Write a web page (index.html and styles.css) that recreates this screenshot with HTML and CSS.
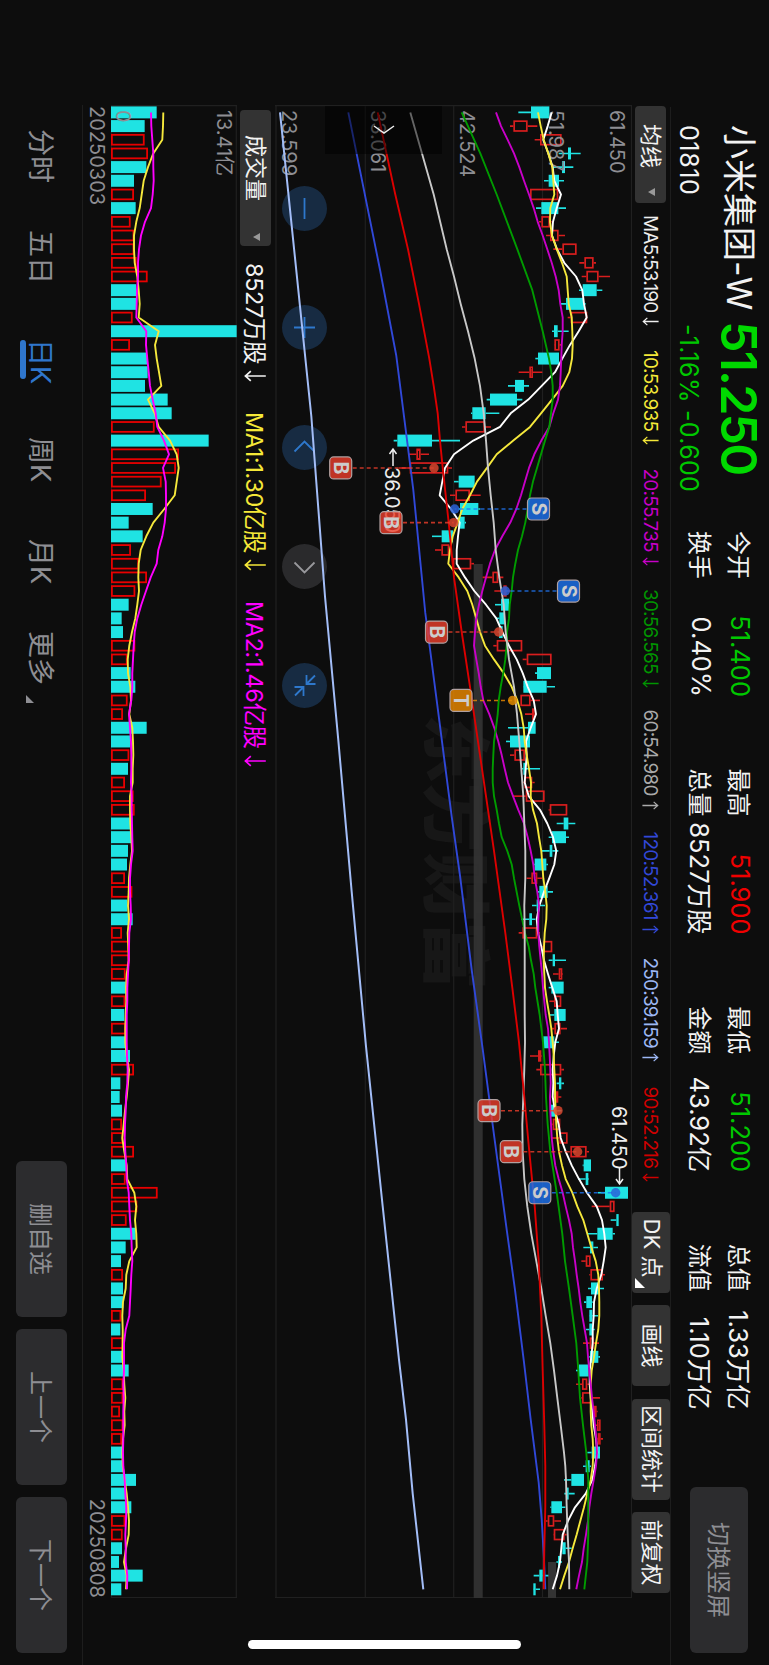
FILE: index.html
```html
<!DOCTYPE html>
<html lang="zh-CN">
<head>
  <meta charset="UTF-8">
  <meta name="viewport" content="width=device-width, initial-scale=1.0">
  <title>小米集团-W 01810</title>
  <link rel="stylesheet" href="styles.css">
</head>
<body>
  <svg class="defs" width="0" height="0">
    <symbol id="down" viewBox="0 0 10 18"><path d="M5 0V17M1 12.5L5 17L9 12.5"/></symbol>
    <symbol id="rise" viewBox="0 0 10 18"><path d="M5 18V1M1 5.5L5 1L9 5.5"/></symbol>
  </svg>
  <div class="stage">
    <header class="quote">
      <div class="stock">
        <div class="stock-top"><span class="name">小米集团-W</span><span class="price">51.250</span></div>
        <div class="stock-sub"><span class="code">01810</span><span class="change">-1.16% -0.600</span></div>
      </div>
      <div class="stats">
        <div class="stat"><span>今开</span><b class="down">51.400</b></div>
        <div class="stat"><span>最高</span><b class="up">51.900</b></div>
        <div class="stat"><span>最低</span><b class="down">51.200</b></div>
        <div class="stat"><span>总值</span><b>1.33万亿</b></div>
        <div class="stat"><span>换手</span><b>0.40%</b></div>
        <div class="stat"><span>总量</span><b>8527万股</b></div>
        <div class="stat"><span>金额</span><b>43.92亿</b></div>
        <div class="stat"><span>流值</span><b>1.10万亿</b></div>
      </div>
      <button class="switch">切换竖屏</button>
    </header>

    <div class="ma-bar">
      <div class="picker ma-picker">均线<i class="caret"></i></div>
      <div class="ma-list">
        <span class="ma5">MA5:53.190<svg class="arr"><use href="#down"/></svg></span>
        <span class="ma10">10:53.935<svg class="arr"><use href="#down"/></svg></span>
        <span class="ma20">20:55.735<svg class="arr"><use href="#down"/></svg></span>
        <span class="ma30">30:56.565<svg class="arr"><use href="#down"/></svg></span>
        <span class="ma60">60:54.980<svg class="arr"><use href="#rise"/></svg></span>
        <span class="ma120">120:52.361<svg class="arr"><use href="#rise"/></svg></span>
        <span class="ma250">250:39.159<svg class="arr"><use href="#rise"/></svg></span>
        <span class="ma90">90:52.216<svg class="arr"><use href="#down"/></svg></span>
      </div>
      <div class="tools">
        <div class="tool dk">DK 点<i class="corner"></i></div>
        <div class="tool">画线</div>
        <div class="tool wide">区间统计</div>
        <div class="tool">前复权</div>
      </div>
    </div>

    <div class="price-chart">
      <div class="watermark">东方财富</div>
      <div class="controls">
        <div class="ctl"><svg viewBox="-22.5 -22.5 45 45"><path d="M-10.5 0H10.5"/></svg></div>
        <div class="ctl"><svg viewBox="-22.5 -22.5 45 45"><path d="M-10.5 0H10.5M0 -10.5V10.5"/></svg></div>
        <div class="ctl"><svg viewBox="-22.5 -22.5 45 45"><path d="M4 -10L-6 0L4 10"/></svg></div>
        <div class="ctl off"><svg viewBox="-22.5 -22.5 45 45"><path d="M-4 -10L6 0L-4 10"/></svg></div>
        <div class="ctl"><svg viewBox="-22.5 -22.5 45 45"><path d="M-10 -10.5L-2 -2.5M-10.5 -2H-1.5V-11M10 9.5L2 1.5M10.5 1H1.5V10"/></svg></div>
      </div>
      <svg id="price" class="plot" width="1493" height="357"></svg>
      <div class="drawer"><svg width="12" height="24" viewBox="0 0 12 24"><path d="M2 2L9 12L2 22"/></svg></div>
    </div>

    <div class="vol-bar">
      <div class="picker vol-picker">成交量<i class="caret"></i></div>
      <span class="vol-now">8527万股<svg class="arr"><use href="#down"/></svg></span>
      <span class="vol-ma1">MA1:1.30亿股<svg class="arr"><use href="#down"/></svg></span>
      <span class="vol-ma2">MA2:1.46亿股<svg class="arr"><use href="#down"/></svg></span>
    </div>

    <div class="vol-chart">
      <svg id="volume" class="plot" width="1493" height="126"></svg>
    </div>

    <div class="dates"><span>20250303</span><span>20250808</span></div>

    <nav class="tabs">
      <div class="tab-list">
        <span>分时</span>
        <span>五日</span>
        <span class="active">日K</span>
        <span>周K</span>
        <span>月K</span>
        <span class="more">更多<i class="corner"></i></span>
      </div>
      <div class="nav-buttons">
        <button>删自选</button>
        <button>上一个</button>
        <button>下一个</button>
      </div>
    </nav>
    <div class="home-bar"></div>
  </div>
  <script src="script.js"></script>
</body>
</html>
```
FILE: styles.css
```css
* {
  box-sizing: border-box;
}
html {
  overflow: hidden;
  background: #0d0d0d;
}
body {
  position: relative;
  margin: 0;
  width: 769px;
  height: 1665px;
  overflow: hidden;
  color: #f2f2f2;
  font-family: Inter, "Noto Sans CJK SC", sans-serif;
}
i {
  font-style: normal;
}
button {
  border: 0;
  border-radius: 6px;
  background: #2c2c2e;
  color: #8e8e93;
  font: 24px Inter, "Noto Sans CJK SC", sans-serif;
  padding: 0 0 2px;
}
.defs {
  position: absolute;
}

/* landscape screen on a portrait page */
.stage {
  position: absolute;
  left: 769px;
  top: 0;
  display: flex;
  flex-direction: column;
  width: 1665px;
  height: 769px;
  transform-origin: 0 0;
  transform: rotate(90deg);
  white-space: nowrap;
}

/* quote header */
.quote {
  display: flex;
  height: 99px;
  margin-left: 107px;
  border-bottom: 1px solid #1d1d1d;
}
.stock {
  width: 424px;
  padding-left: 18px;
}
.stock-top {
  display: flex;
  align-items: center;
  height: 59px;
}
.name {
  width: 196px;
  font-size: 34px;
  line-height: 48px;
}
.price {
  font-size: 50px;
  line-height: 58px;
  font-weight: 600;
  color: #00d900;
  letter-spacing: -1.8px;
}
.stock-sub {
  display: flex;
  align-items: center;
  height: 41px;
  font-size: 25px;
}
.code {
  width: 199px;
  letter-spacing: 0.6px;
}
.change {
  color: #00c800;
  letter-spacing: 0.3px;
}
.stats {
  display: grid;
  grid-template-columns: repeat(4, 166px);
  grid-template-rows: 39px 39px;
  column-gap: 71.6px;
  padding-top: 9px;
  width: 956px;
}
.stat {
  display: flex;
  align-items: center;
  justify-content: space-between;
  font-size: 24px;
}
.stat b {
  font-weight: 400;
  font-size: 25.5px;
  letter-spacing: 0;
}
.stat .down {
  color: #00c800;
}
.stat .up {
  color: #f00000;
}
.switch {
  width: 166px;
  height: 58px;
  margin-top: 21px;
  padding-bottom: 4px;
}

/* moving averages */
.ma-bar {
  display: flex;
  align-items: center;
  height: 38px;
  padding-left: 106px;
}
.picker {
  display: flex;
  align-items: center;
  justify-content: space-between;
  height: 31px;
  border-radius: 4px;
  background: #333;
  font-size: 22px;
  line-height: 30px;
  padding-bottom: 1px;
}
.ma-picker {
  width: 97px;
  padding-left: 18px;
  padding-right: 7px;
}
.vol-picker {
  width: 136px;
  padding-left: 25px;
  padding-right: 5px;
}
.caret {
  border: 4px solid transparent;
  border-top: 7px solid #999;
  border-bottom: 0;
}
.ma-list {
  display: grid;
  grid-template-columns: 135px 118.5px 120.5px 120.5px 122px 126px 129px 125px;
  padding-left: 12px;
  font-size: 19px;
  letter-spacing: -0.8px;
}
.arr {
  width: 9px;
  height: 17px;
  margin-left: 5px;
  vertical-align: -2px;
  fill: none;
  stroke: currentColor;
  stroke-width: 1.4;
}
.ma5 { color: #eee; }
.ma10 { color: #f5e838; }
.ma20 { color: #c800c8; }
.ma30 { color: #009600; }
.ma60 { color: #aaa; }
.ma120 { color: #3248d8; }
.ma250 { color: #9db8f5; }
.ma90 { color: #d00000; }
.tools {
  display: flex;
  gap: 12.5px;
}
.tool {
  position: relative;
  width: 81px;
  height: 38px;
  line-height: 36px;
  border-radius: 4px;
  background: #333;
  font-size: 22px;
  text-align: center;
}
.tool.wide {
  width: 101px;
}
.dk {
  padding-right: 8px;
}
.corner {
  position: absolute;
  right: 5px;
  bottom: 3px;
  border: 5px solid #fff;
  border-top-color: transparent;
  border-left-color: transparent;
}

/* candles */
.price-chart {
  position: relative;
  height: 357px;
  margin-left: 105px;
}
.plot {
  position: absolute;
  left: 0;
  top: 0;
  font-family: Inter, "Noto Sans CJK SC", sans-serif;
}
.watermark {
  position: absolute;
  left: 609px;
  top: 127px;
  font-size: 69px;
  line-height: 100px;
  font-weight: 900;
  color: #171717;
}
.controls {
  position: absolute;
  left: 81px;
  top: 305px;
  display: flex;
  gap: 74.3px;
}
.ctl {
  width: 45px;
  height: 45px;
  border-radius: 50%;
  background: #172b42;
}
.ctl svg {
  display: block;
  fill: none;
  stroke: #2e78cc;
  stroke-width: 1.8;
}
.ctl.off {
  background: #2a2a2c;
}
.ctl.off svg {
  stroke: #98989c;
}
.drawer {
  position: absolute;
  left: 1px;
  top: 190px;
  width: 48px;
  height: 117px;
  padding: 46px 0 0 18px;
  background: rgba(0, 0, 0, 0.5);
}
.drawer path {
  fill: none;
  stroke: #eee;
  stroke-width: 1.5;
}

/* volume */
.vol-bar {
  display: flex;
  align-items: center;
  height: 38px;
  padding-left: 110px;
  font-size: 23.5px;
  letter-spacing: -0.4px;
}
.vol-picker {
  letter-spacing: 0;
}
.vol-now {
  width: 149px;
  margin-left: 17px;
}
.vol-ma1 {
  width: 189px;
  color: #f5e838;
}
.vol-ma2 {
  color: #f0f;
}
.vol-bar .arr {
  width: 12px;
  height: 22px;
  margin-left: 6px;
}
.vol-chart {
  position: relative;
  height: 126px;
  margin-left: 105px;
}
.dates {
  display: flex;
  justify-content: space-between;
  align-items: center;
  height: 28px;
  margin: 0 67px 0 106px;
  color: #8e8e93;
  font-size: 20px;
}

/* bottom tabs */
.tabs {
  display: flex;
  height: 83px;
  margin-left: 105px;
  border-top: 1px solid #1d1d1d;
}
.tab-list {
  display: grid;
  grid-template-columns: 101px 109px 98px 102px 92px 100px;
  width: 1032px;
  padding: 23px 0 0 24px;
  font-size: 27px;
  line-height: 38px;
  color: #8e8e93;
}
.tab-list span {
  position: relative;
  justify-self: start;
  height: 38px;
}
.tab-list .active {
  color: #2f76cc;
}
.active::after {
  content: "";
  position: absolute;
  left: 1px;
  bottom: -1px;
  width: 39px;
  height: 6px;
  border-radius: 3px;
  background: #2f76cc;
}
.more .corner {
  right: -18px;
  bottom: 5px;
  border-width: 4px;
  border-right-color: #8e8e93;
  border-bottom-color: #8e8e93;
}
.nav-buttons {
  display: flex;
  gap: 12px;
  margin: 15px 0 0 24px;
}
.nav-buttons button {
  width: 156px;
  height: 51px;
}
.home-bar {
  position: absolute;
  left: 1640px;
  top: 248px;
  width: 9px;
  height: 273px;
  border-radius: 5px;
  background: #fff;
}
```
FILE: script.js
```js
const STEP = 13.675;
const FIRST = 7.4;
const CYAN = '#1fe3e3';
const RED = '#d81e1e';

// one entry per day: colour, low, body bottom, body top, high (1/3 px)
const candles = `
c 415 453 508 508|r 390 400 443 472|r 464 480 545 545|c 536 564 573 602|c 520 546 555 580|c 492 506 537 552
r 450 450 535 535|c 468 484 535 558|r 477 484 510 515|r 498 510 536 555|r 520 547 590 590|r 598 613 641 648
r 605 619 656 690|c 597 608 650 667|c 542 558 612 617|r 563 572 622 622|c 516 522 533 566|r 522 523 539 545
c 466 474 537 537|r 416 448 459 487|c 384 405 432 447|c 320 330 411 427|c 273 277 317 358|r 246 256 315 333
c 41 52 156 240|r 85 109 122 147|r 57 89 205 216|c 222 236 284 284|r 210 226 270 302|c 235 240 295 301
c 232 235 254 258|c 156 185 219 219|r 165 184 208 208|r 218 218 274 282|r 308 337 355 370|r 343 370 380 392
c 345 363 387 387|c 347 358 374 374|c 355 357 368 368|r 340 350 427 427|r 428 440 515 515|c 465 471 513 513
c 429 430 500 525|r 421 421 452 480|r 435 456 464 468|c 384 444 467 467|c 378 390 450 450|r 390 403 435 435
c 424 430 437 480|r 430 433 457 464|r 399 437 494 494|r 506 509 562 562|c 530 551 565 586|c 506 516 558 567
c 485 509 517 535|c 459 464 499 504|r 440 454 472 486|c 474 478 503 519|c 456 470 478 495|c 424 448 456 466
r 416 427 472 480|r 487 490 517 517|c 506 518 525 558|r 519 536 547 549|c 506 514 551 551|r 508 522 544 544
c 509 523 557 557|r 513 523 542 561|c 489 490 523 537|r 450 474 484 486|r 469 480 544 552|c 530 537 544 552
r 520 530 535 544|c 512 513 526 545|r 514 518 541 541|r 515 538 563 563|r 568 571 620 627|c 608 611 633 633
c 594 617 625 627|c 654 675 744 744|r 635 689 704 704|c 692 709 716 716|c 624 652 698 705|c 610 630 640 654
r 604 617 632 632|r 628 631 669 675|c 624 633 658 672|c 612 619 636 638|c 627 628 637 654|c 618 628 637 644
r 609 629 641 657|c 628 630 655 660|c 588 597 625 625|r 588 606 622 630|r 604 606 636 660|r 636 642 650 653
r 645 651 662 662|r 645 653 662 669|c 622 635 660 660|c 609 617 629 633|c 552 574 612 612|c 553 559 566 584
c 511 514 546 556|r 498 503 523 543|r 520 521 554 560|c 543 547 557 575|c 529 534 540 546|c 461 478 488 505
c 459 460 467 480`.trim().split(/[|\n]/).map(s => s.split(' '));

// moving averages, one value per day
const ma5 = [515,503,490,505,518,523,543,530,519,516,531,553,588,607,612,620,596,570,547,525,485,445,392,360,280,222,195,187,179,213,239,234,230,230,255,283,318,349,367,387,410,428,443,461,468,452,438,440,437,434,446,480,502,519,529,523,508,492,478,470,474,484,492,504,517,530,533,537,526,521,518,520,518,525,536,542,557,575,597,621,650,666,673,677,671,664,650,642,641,638,638,634,629,629,632,637,641,648,652,645,637,617,585,564,548,544,540,531,518];
const ma10 = [474,482,491,505,517,520,523,511,510,516,530,546,560,563,566,575,577,578,576,568,548,516,483,450,400,350,321,291,270,247,233,218,210,205,236,262,277,289,300,315,342,371,395,412,424,431,434,440,447,453,452,459,471,477,484,487,490,496,500,499,494,492,491,493,495,501,508,514,518,521,523,525,525,527,529,532,537,546,557,577,592,610,622,634,647,655,657,658,658,655,648,642,635,632,632,632,634,638,640,638,632,622,612,601,590,578,567,553,540];
const ma20 = [348,363,383,402,418,432,447,461,473,488,502,515,527,536,541,548,548,545,544,542,540,534,520,508,484,463,447,435,423,409,391,367,345,330,318,307,297,289,285,282,289,296,302,310,328,343,355,365,374,384,399,415,432,443,452,460,464,472,477,475,475,478,482,486,489,493,497,504,507,509,511,512,510,511,513,515,520,526,536,548,557,567,575,579,585,590,596,601,607,614,621,624,628,632,636,641,645,649,651,648,641,634,628,624,618,611,606,597,589];

// slower averages, as [day, value] knots
const ma30 = [[0,245],[3,301],[6,350],[10,412],[13,457],[16,488],[18,507],[19,514],[20,518],[21,518],[22,513],[23,508],[24,495],[25,483],[26,471],[27,459],[28,450],[29,443],[30,436],[31,426],[32,414],[33,406],[34,399],[35,395],[36,389],[37,387],[38,381],[39,380],[40,376],[41,370],[42,362],[43,356],[44,353],[45,348],[46,342],[47,340],[48,338],[49,338],[50,342],[51,350],[52,357],[53,365],[54,382],[55,395],[56,402],[58,418],[60,435],[61,446],[62,453],[63,461],[64,466],[66,479],[68,489],[70,495],[72,498],[74,503],[76,511],[79,530],[82,547],[84,555],[86,567],[88,578],[90,589],[92,595],[94,600],[96,609],[98,619],[100,625],[102,625],[104,625],[106,622],[108,613]];
const ma60 = [[0,91],[3,126],[6,161],[10,200],[12,222],[14,242],[16,264],[18,284],[20,300],[22,311],[24,318],[26,324],[28,332],[30,341],[32,347],[34,358],[36,371],[38,377],[40,387],[42,402],[44,411],[46,418],[48,424],[50,430],[52,433],[54,436],[56,436],[58,433],[60,434],[66,434],[68,435],[70,433],[72,430],[74,427],[76,428],[78,433],[80,442],[82,454],[84,469],[86,484],[88,497],[90,511],[92,522],[94,532],[96,542],[98,552],[99,556],[100,558],[102,560],[104,563],[106,567],[108,568]];
const ma90 = [[0,-7],[6,46],[10,84],[14,117],[18,148],[20,161],[22,173],[24,180],[26,188],[30,206],[34,222],[38,245],[42,270],[46,294],[50,318],[54,342],[60,376],[64,397],[68,417],[72,433],[76,448],[80,464],[84,476],[88,484],[92,488],[96,493],[99,496],[102,496],[105,493],[108,491]];
const ma120 = [[0,-95],[11.5,0],[17.8,49],[23.2,77],[27.6,100],[36.6,136],[43,170],[51.5,215],[55.8,240],[62.7,275],[68.5,308],[74.6,341],[81.7,380],[86.1,405],[91.4,432],[95.6,452],[100.2,476],[102.9,485],[105.8,492],[108,496]];
const ma250 = [[0,-300],[22.2,-206],[35.4,-165],[45.9,-125],[57,-85],[68.3,-42],[80,8],[91.2,57],[95.6,78],[101,98],[108,130]];

const volumes = 'c170 c134 r134 r144 c139 c102 r102 c107 r92 r103 r103 r110 r143 c108 c109 r98 c410 r90 c141 c143 c135 c203 c215 r164 c326 r237 r228 r185 r138 c158 c86 c128 r93 r117 r141 r106 c86 c65 c69 r106 r83 c92 c106 r83 r69 c140 c90 r88 c84 r75 r101 r104 c95 c95 c84 c81 r75 r97 c82 c98 r66 r87 r88 r77 c77 r76 c73 r78 c79 c90 r102 c61 c59 c66 r66 r70 r102 c80 r77 r173 r112 r80 c107 c77 c63 r69 c69 c70 r64 c61 r70 c67 c86 r70 r70 r60 r70 r66 c67 c70 c108 c76 c94 r76 r68 c66 c57 c128 c64'.split(' ');
const volMa1 = [190,189,187,160,144,131,125,119,109,102,102,104,112,116,119,116,176,165,170,177,184,144,164,176,210,230,236,230,224,193,160,139,122,116,115,117,112,106,96,88,83,84,91,93,88,97,99,100,98,98,90,90,91,94,96,91,87,86,84,87,83,85,86,80,78,79,77,76,76,80,87,84,80,75,71,67,73,80,82,103,109,105,109,110,88,79,77,69,67,68,68,67,71,73,76,73,74,69,67,68,74,80,84,87,86,78,72,80,78];
const volMa2 = [153,154,157,160,160,161,158,153,135,123,117,114,114,111,110,109,139,138,142,146,150,158,167,172,192,207,189,197,198,198,194,187,175,170,152,138,124,112,104,101,99,97,97,94,87,90,93,94,94,93,95,95,96,97,98,93,90,90,92,93,88,87,86,84,82,82,80,80,80,81,83,82,78,77,75,74,76,79,80,86,88,90,94,95,97,94,92,90,88,77,72,72,72,70,71,70,70,70,69,70,74,76,79,78,76,77,77,82,81];

// trade marks: type, day, badge y, dot value
const marks = [
  ['B', 26, 291.3, 162], ['B', 30, 241, 221], ['S', 29, 93.5, 224], ['S', 35, 63.5, 376],
  ['B', 38, 195.5, 356], ['T', 43, 171, 398], ['B', 73, 143, 534], ['B', 76, 120.7, 593], ['S', 79, 92.2, 707]
];
const markColor = { B: '#ee3e2c', S: '#1e74f2', T: '#f08c00' };
const dotColor = { B: '#d8452e', S: '#2a62d8', T: '#e08a00' };

const dayX = i => FIRST + i * STEP;
const priceY = v => 252 - v / 3;
const volY = v => 137 - v / 3;

function line(points, y, color, width = 1.9) {
  const d = points.map((p, i) => {
    const [day, v] = Array.isArray(p) ? p : [i, p];
    return dayX(day).toFixed(1) + ',' + y(v).toFixed(1);
  }).join(' ');
  return `<polyline points="${d}" fill="none" stroke="${color}" stroke-width="${width}" stroke-linejoin="round"/>`;
}

function box(color, x, top, bottom, width = 1.7) {
  const h = bottom - top;
  if (color === CYAN) {
    return `<rect x="${x - 6}" y="${top}" width="12" height="${h}" fill="${color}"/>`;
  }
  return `<rect x="${x - 4.9}" y="${top + width / 2}" width="9.8" height="${Math.max(h - width, 1)}" fill="none" stroke="${color}" stroke-width="${width}"/>`;
}

function label(x, y, text, color = '#8e8e93', size = 20) {
  return `<text x="${x}" y="${y}" fill="${color}" font-size="${size}" letter-spacing="-0.1">${text}</text>`;
}

function drawPrice() {
  let s = '';
  [0.5, 89.5, 178.3, 266.7, 356].forEach(y => {
    s += `<path d="M0 ${y}H1493" stroke="#202020" stroke-width="1.2"/>`;
  });
  s += '<path d="M.7 0V357M1492.5 0V357" stroke="#202020" stroke-width="1.2"/>';
  s += '<rect x="459" y="149.3" width="1034" height="9" fill="#333" fill-opacity=".95"/>';
  s += '<rect x="1457" y="76" width="36" height="8" fill="#333"/>';

  candles.forEach(([type, lo, b, t, hi], i) => {
    const color = type === 'c' ? CYAN : RED;
    const x = dayX(i);
    s += `<path d="M${x} ${priceY(hi)}V${priceY(t)}M${x} ${priceY(b)}V${priceY(lo)}" stroke="${color}" stroke-width="1.6"/>`;
    s += box(color, x, priceY(t), priceY(b));
  });

  s += label(5, 22, '61.450') + label(5, 83.5, '51.987') + label(5, 172, '42.524');
  s += label(5, 261, '33.061') + label(5, 350, '23.599');

  s += line(ma5, priceY, '#fff') + line(ma10, priceY, '#f5e83c') + line(ma20, priceY, '#c800c8');
  s += line(ma30, priceY, '#009b00') + line(ma60, priceY, '#c8c8c8') + line(ma120, priceY, '#3048d8');
  s += line(ma250, priceY, '#a3bdf7', 2) + line(ma90, priceY, '#dc0000');

  // lowest and highest price
  s += '<path d="M361 239H344M349 235.5L344 239L349 242.5" fill="none" stroke="#eee" stroke-width="1.5"/>';
  s += label(362, 247, '36.050', '#eee');
  s += label(1001, 20.5, '61.450', '#eee');
  s += '<path d="M1063 12.5H1079M1074 9L1079 12.5L1074 16" fill="none" stroke="#eee" stroke-width="1.5"/>';

  marks.forEach(([type, day, y, v]) => {
    const x = dayX(day);
    const dy = priceY(v);
    const c = markColor[type];
    s += `<path d="M${x} ${y < dy ? y + 12 : y - 12}V${dy}" stroke="${c}" stroke-opacity=".8" stroke-width="1.6" stroke-dasharray="4 3"/>`;
    s += `<circle cx="${x}" cy="${dy}" r="4.7" fill="${dotColor[type]}" fill-opacity=".85"/>`;
    s += `<rect x="${x - 11}" y="${y - 11}" width="22" height="22" rx="4" fill="${c}" fill-opacity=".8" stroke="#b0a0a0" stroke-width="1.2"/>`;
    s += `<text x="${x}" y="${y + 7}" text-anchor="middle" font-size="19.5" font-weight="700" fill="#ccc">${type}</text>`;
  });
  document.getElementById('price').innerHTML = s;
}

function drawVolume() {
  let s = '<path d="M0 .7H1493M0 125.5H1493M.7 0V126M1492.5 0V126" stroke="#202020" stroke-width="1.2"/>';
  volumes.forEach((d, i) => {
    const color = d[0] === 'c' ? CYAN : '#e80000';
    s += box(color, dayX(i), volY(d.slice(1)), 126, 1.8);
  });
  s += label(5, 20.5, '13.41亿') + label(5, 121, '0');
  s += line(volMa1, volY, '#f5e83c') + line(volMa2, volY, '#f0f');
  document.getElementById('volume').innerHTML = s;
}

drawPrice();
drawVolume();
```
